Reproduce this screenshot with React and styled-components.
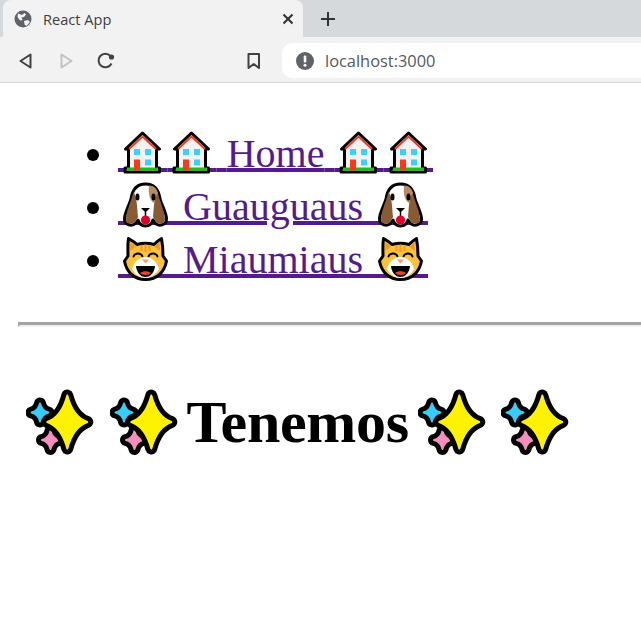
import React from "react";
import styled, { createGlobalStyle } from "styled-components";

const GlobalStyle = createGlobalStyle`
  html, body {
    margin: 0;
    padding: 0;
    background: #fff;
    overflow: hidden;
  }
  body {
    font-family: "Liberation Serif", "Times New Roman", serif;
  }
`;

const Page = styled.div`
  width: 641px;
  height: 618px;
  overflow: hidden;
`;

const TabStrip = styled.div`
  height: 37px;
  display: flex;
  align-items: flex-end;
  background: #d6d9dc;
`;

const Tab = styled.div`
  width: 300px;
  height: 37px;
  margin-left: 3px;
  padding: 0 8px 0 11px;
  box-sizing: border-box;
  display: flex;
  align-items: center;
  background: #f2f2f2;
  border-radius: 8px 8px 0 0;
`;

const TabTitle = styled.span`
  flex: 1;
  margin-left: 11px;
  font-family: "Open Sans", "Noto Sans", sans-serif;
  font-size: 14.6px;
  color: #3c4043;
`;

const NewTab = styled.div`
  width: 24px;
  height: 37px;
  margin-left: 13px;
  display: flex;
  align-items: center;
  justify-content: center;
`;

const Toolbar = styled.div`
  height: 46px;
  box-sizing: border-box;
  display: flex;
  align-items: flex-start;
  padding: 6px 0 0 16px;
  background: #f2f2f2;
  border-bottom: 1px solid #d8d8d8;
`;

const NavButton = styled.div`
  width: 40px;
  height: 35px;
  display: flex;
  align-items: center;
  justify-content: flex-start;
`;

const BookmarkButton = styled(NavButton)`
  width: 36px;
  margin-left: 110px;
`;

const AddressBar = styled.div`
  flex: 1;
  height: 35px;
  display: flex;
  align-items: center;
  padding-left: 14px;
  background: #fff;
  border-radius: 10px 0 0 10px;
`;

const Address = styled.span`
  margin-left: 11px;
  font-family: "Open Sans", "Noto Sans", sans-serif;
  font-size: 16.4px;
  color: #555a5f;
`;

const Main = styled.main`
  padding-left: 18px;
`;

const NavList = styled.ul`
  margin: 44px 0 36px;
  padding: 0 0 0 100px;
  font-size: 40px;
  line-height: 53px;
`;

const NavLink = styled.a`
  color: #551a8b;
  text-decoration: underline;
  text-decoration-thickness: 4px;
  text-underline-offset: 1px;
  cursor: pointer;
`;

const Rule = styled.hr`
  margin: 0;
  height: 0;
  border: 0;
  border-top: 3px solid #a3a3a3;
  border-left: 2px solid #a3a3a3;
  border-bottom: 2px solid #f0f0f0;
`;

const Heading = styled.h2`
  margin: 53px 0 0;
  font-size: 60px;
  line-height: 84px;
  font-weight: bold;
  color: #000;
  white-space: nowrap;
`;

const HeadingText = styled.span`
  letter-spacing: -0.3px;
  margin: 0 1px 0 1px;
`;

// reserves the advance of an emoji on the line, so the link underline runs under it
const EmojiSlot = styled.span`
  position: relative;
  letter-spacing: ${(p) => p.$advance}px;
  font-size: ${(p) => p.$size}px;
`;

const EmojiArt = styled.svg`
  position: absolute;
  left: ${(p) => p.$left}px;
  bottom: ${(p) => p.$bottom}px;
`;

const House = () => (
  <EmojiArt $left={4} $bottom={2} width="41" height="43" viewBox="0 0 41 43">
    <path d="M20.5 2 L37.5 18 H34.5 V37 H37.5 V41 H3 V37 H6.5 V18 H3.5 Z" fill="#f2f2f2" stroke="#000" strokeWidth="3" strokeLinejoin="round" />
    <path d="M7 18 L20.5 5.5 L34 18" fill="none" stroke="#f63b1c" strokeWidth="2" />
    <path d="M5 36.5 H36 V39.5 H5 Z" fill="#16c60c" />
    <rect x="12" y="18" width="6" height="6" fill="#3dcfff" />
    <rect x="23" y="18" width="6" height="6" fill="#3dcfff" />
    <rect x="23" y="28.5" width="6" height="6" fill="#3dcfff" />
    <rect x="12" y="28.5" width="6" height="11" fill="#f63b1c" />
  </EmojiArt>
);

const Dog = () => (
  <EmojiArt $left={5} $bottom={1} width="45" height="46" viewBox="0 0 45 46">
    <path d="M22.5 2 C12 2 9 10 8 17 C6 24 1.5 31 1.5 37 C1.5 43 9 45 13 41 L15 38 C16 41 18 44 22.5 44 C27 44 29 41 30 38 L32 41 C36 45 43.5 43 43.5 37 C43.5 31 39 24 37 17 C36 10 33 2 22.5 2 Z" fill="#fff" stroke="#000" strokeWidth="3" strokeLinejoin="round" />
    <path d="M10.5 10 C9 17 3 30 3 37 C3 42 9 43 12 40 L15 35 C14 25 14 15 10.5 10 Z" fill="#8a5a33" />
    <path d="M34.5 10 C36 17 42 30 42 37 C42 42 36 43 33 40 L30 35 C31 25 31 15 34.5 10 Z" fill="#8a5a33" />
    <path d="M26 3.5 C31 3.5 34 7 35 11 C33 14 32 18 31 21 C27 19 25 12 26 3.5 Z" fill="#b88c62" />
    <ellipse cx="14.5" cy="15" rx="2" ry="3.6" fill="#000" />
    <ellipse cx="30.5" cy="15" rx="2" ry="3.6" fill="#000" />
    <path d="M18 26 H27 L22.5 30.5 Z" fill="#000" />
    <path d="M22.5 30 V34" stroke="#000" strokeWidth="1.5" />
    <circle cx="22.5" cy="38" r="4.6" fill="#e4002b" />
  </EmojiArt>
);

const Cat = () => (
  <EmojiArt $left={5} $bottom={1} width="45" height="45" viewBox="0 0 45 45">
    <path d="M5.5 2.5 C9 4.5 12 6.5 14 8.5 C19 7 26 7 31 8.5 C33 6.5 35 4.5 38.5 2.5 C39.5 8 40 15 40 20 L43.5 25 C41.5 36 34 43.5 22.5 43.5 C11 43.5 3.5 36 1.5 25 L5 20 C5 15 4.5 8 5.5 2.5 Z" fill="#fcc13d" stroke="#000" strokeWidth="3" strokeLinejoin="round" />
    <path d="M7.5 6 L13 10.5 L7 15 Z" fill="#ef9a22" />
    <path d="M36.5 6 L31 10.5 L37 15 Z" fill="#ef9a22" />
    <path d="M18.5 9 V15 M22.5 8.5 V16 M26.5 9 V15" stroke="#ef9a22" strokeWidth="2" />
    <path d="M10.5 20.5 C12 16.5 18 16.5 19.5 20.5" fill="none" stroke="#000" strokeWidth="2" strokeLinecap="round" />
    <path d="M25.5 20.5 C27 16.5 33 16.5 34.5 20.5" fill="none" stroke="#000" strokeWidth="2" strokeLinecap="round" />
    <path d="M22.5 21 C15 21 10 28 9 33 C12 39 18 42 22.5 42 C27 42 33 39 36 33 C35 28 30 21 22.5 21 Z" fill="#fff" />
    <path d="M19 23.5 H26 L22.5 27.5 Z" fill="#f79a6d" />
    <path d="M13 30 H32 C31.5 36 28 41 22.5 41 C17 41 13.5 36 13 30 Z" fill="#000" />
    <path d="M17 37 C20 34.5 25 34.5 28 37 C26 39.5 19 39.5 17 37 Z" fill="#e6452c" />
  </EmojiArt>
);

// four-armed star: each side is a cubic bending towards the centre
const starPath = (cx, cy, rx, ry, a) => {
  const mx = rx * 0.5;
  const my = ry * 0.5;
  return [
    `M${cx} ${cy - ry}`,
    `C${cx + a} ${cy - my} ${cx + mx} ${cy - a} ${cx + rx} ${cy}`,
    `C${cx + mx} ${cy + a} ${cx + a} ${cy + my} ${cx} ${cy + ry}`,
    `C${cx - a} ${cy + my} ${cx - mx} ${cy + a} ${cx - rx} ${cy}`,
    `C${cx - mx} ${cy - a} ${cx - a} ${cy - my} ${cx} ${cy - ry}Z`,
  ].join(" ");
};

const Star = ({ d, fill }) => (
  <>
    <path d={d} fill="#000" stroke="#000" strokeWidth="12" strokeLinejoin="round" />
    <path d={d} fill={fill} stroke={fill} strokeWidth="2" strokeLinejoin="round" />
  </>
);

const Sparkles = () => (
  <EmojiArt $left={8} $bottom={-1} width="68" height="67" viewBox="0 0 68 67">
    <Star d={starPath(14, 23.5, 8.5, 9, 1)} fill="#38cdf9" />
    <Star d={starPath(24.5, 51, 8.5, 9, 1)} fill="#f48fbe" />
    <Star d={starPath(41.3, 33, 20, 26.5, 3.5)} fill="#fff200" />
  </EmojiArt>
);

const Emoji = ({ art: Art, advance, size = 40 }) => (
  <EmojiSlot $advance={advance - size * 0.25} $size={size}>
    {"\u00a0"}
    <Art />
  </EmojiSlot>
);

const Globe = () => (
  <svg width="18" height="18" viewBox="0 0 18 18">
    <circle cx="9" cy="9" r="8.5" fill="#5f6368" />
    <path d="M4 3.5 L8 5 L10.5 3 L12 4.5 L10 7 L7.5 7.5 L8.5 10 L6 10.5 L3.5 7 Z" fill="#f2f2f2" />
    <path d="M10 11 L14 10 L16 12 L12.5 16 L10.5 14.5 Z" fill="#f2f2f2" />
  </svg>
);

const CloseIcon = () => (
  <svg width="14" height="14" viewBox="0 0 14 14">
    <path d="M2.5 2.5 L11.5 11.5 M11.5 2.5 L2.5 11.5" stroke="#2f3133" strokeWidth="2" />
  </svg>
);

const PlusIcon = () => (
  <svg width="16" height="16" viewBox="0 0 16 16">
    <path d="M8 1 V15 M1 8 H15" stroke="#303234" strokeWidth="2" />
  </svg>
);

const BackIcon = () => (
  <svg width="20" height="20" viewBox="0 0 20 20">
    <path d="M14.5 3.5 V16.5 L4.5 10 Z" fill="none" stroke="#3f4245" strokeWidth="2" strokeLinejoin="round" />
  </svg>
);

const ForwardIcon = () => (
  <svg width="20" height="20" viewBox="0 0 20 20">
    <path d="M5.5 3.5 V16.5 L15.5 10 Z" fill="none" stroke="#c0c2c4" strokeWidth="2" strokeLinejoin="round" />
  </svg>
);

const ReloadIcon = () => (
  <svg width="20" height="20" viewBox="0 0 20 20">
    <path d="M15.5 12.5 A6.8 6.8 0 1 1 14.5 5" fill="none" stroke="#3f4245" strokeWidth="2" />
    <circle cx="15.5" cy="6" r="2.6" fill="#3f4245" />
  </svg>
);

const BookmarkIcon = () => (
  <svg width="16" height="18" viewBox="0 0 16 18">
    <path d="M2.5 2 H13 V16 L7.75 12 L2.5 16 Z" fill="none" stroke="#3f4245" strokeWidth="2" strokeLinejoin="round" />
  </svg>
);

const InfoIcon = () => (
  <svg width="18" height="18" viewBox="0 0 18 18">
    <circle cx="9" cy="9" r="9" fill="#5f6368" />
    <rect x="7.7" y="3.5" width="2.6" height="7" rx="1" fill="#fff" />
    <circle cx="9" cy="13.2" r="1.5" fill="#fff" />
  </svg>
);

const links = [
  { art: House, advance: 49.3, label: "Home", count: 2 },
  { art: Dog, advance: 55, label: "Guauguaus", count: 1 },
  { art: Cat, advance: 55, label: "Miaumiaus", count: 1 },
];

const repeat = (count, make) => Array.from({ length: count }, (_, i) => make(i));

export default function App() {
  return (
    <Page>
      <GlobalStyle />
      <TabStrip>
        <Tab>
          <Globe />
          <TabTitle>React App</TabTitle>
          <CloseIcon />
        </Tab>
        <NewTab>
          <PlusIcon />
        </NewTab>
      </TabStrip>
      <Toolbar>
        <NavButton>
          <BackIcon />
        </NavButton>
        <NavButton>
          <ForwardIcon />
        </NavButton>
        <NavButton>
          <ReloadIcon />
        </NavButton>
        <BookmarkButton>
          <BookmarkIcon />
        </BookmarkButton>
        <AddressBar>
          <InfoIcon />
          <Address>localhost:3000</Address>
        </AddressBar>
      </Toolbar>
      <Main>
        <NavList>
          {links.map((link) => (
            <li key={link.label}>
              <NavLink>
                {repeat(link.count, (i) => (
                  <Emoji key={i} art={link.art} advance={link.advance} />
                ))}{" "}
                {link.label}{" "}
                {repeat(link.count, (i) => (
                  <Emoji key={i} art={link.art} advance={link.advance} />
                ))}
              </NavLink>
            </li>
          ))}
        </NavList>
        <Rule />
        <Heading>
          <Emoji art={Sparkles} advance={83.7} size={60} />
          <Emoji art={Sparkles} advance={83.7} size={60} />
          <HeadingText>Tenemos</HeadingText>
          <Emoji art={Sparkles} advance={83.7} size={60} />
          <Emoji art={Sparkles} advance={83.7} size={60} />
        </Heading>
      </Main>
    </Page>
  );
}
